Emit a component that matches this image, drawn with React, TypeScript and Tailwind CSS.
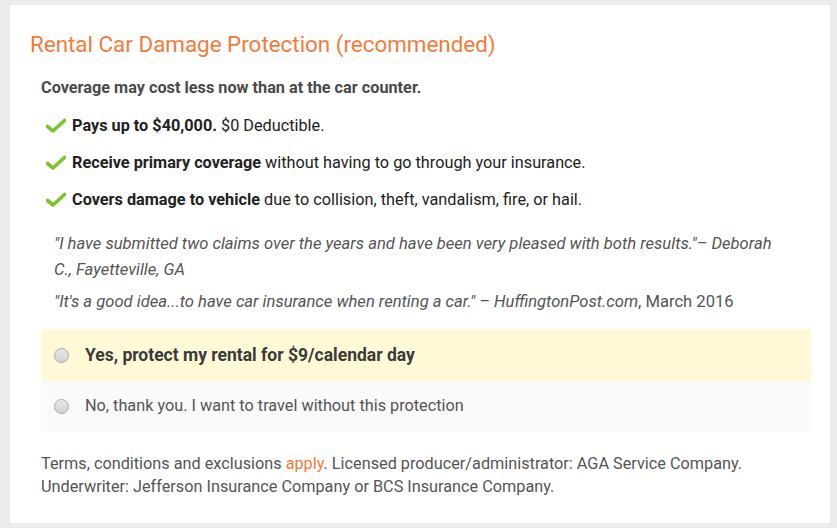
import React from "react";

function Check() {
  return (
    <svg width="20" height="16" viewBox="0 0 20 16" className="shrink-0">
      <path d="M1.5 8.5 L7 13 L18.5 2.5" fill="none" stroke="#7ac52b" strokeWidth="3.6" strokeLinecap="round" strokeLinejoin="round" />
    </svg>
  );
}

function Radio() {
  return (
    <span className="block h-[15px] w-[15px] shrink-0 rounded-full border border-[#a9a9a9] bg-gradient-to-b from-[#e9e9e9] to-[#d2d2d2]" />
  );
}

const bullets = [
  { bold: "Pays up to $40,000.", rest: " $0 Deductible." },
  { bold: "Receive primary coverage", rest: " without having to go through your insurance." },
  { bold: "Covers damage to vehicle", rest: " due to collision, theft, vandalism, fire, or hail." },
];

export default function App() {
  return (
    <div className="min-h-[528px] w-[837px] bg-[#ebebeb] pt-[5px] pl-[10px]" style={{ fontFamily: "Roboto, 'Liberation Sans', sans-serif" }}>
      <div className="h-[518px] w-[820px] bg-white pl-[20px] pt-[24px]">
        <h1 className="text-[22.4px] leading-[30px] text-[#f47b3b]">Rental Car Damage Protection (recommended)</h1>
        <div className="pl-[11px] pr-[19px]">
          <p className="mt-[19px] text-[16.25px] font-bold leading-[20px] text-[#4a4a4a]">Coverage may cost less now than at the car counter.</p>
          <ul className="mt-[18px] flex flex-col gap-[17px] pl-[5px]">
            {bullets.map((b) => (
              <li key={b.bold} className="flex items-center gap-[6px] text-[16.25px] leading-[20px] text-[#222]">
                <Check />
                <span>
                  <span className="font-bold">{b.bold}</span>
                  {b.rest}
                </span>
              </li>
            ))}
          </ul>
          <div className="mt-[21px] pl-[13px] pr-[20px] text-[16.6px] leading-[26px] text-[#555]">
            <p className="italic">"I have submitted two claims over the years and have been very pleased with both results."– Deborah C., Fayetteville, GA</p>
            <p className="mt-[6px]">
              <span className="italic">"It's a good idea...to have car insurance when renting a car." – HuffingtonPost.com</span>, March 2016
            </p>
          </div>
          <div className="mt-[14px]">
            <label className="flex h-[52px] items-center gap-[16px] bg-[#fffad5] pl-[13px]">
              <Radio />
              <span className="text-[17.5px] font-bold text-[#3a3a3a]">Yes, protect my rental for $9/calendar day</span>
            </label>
            <label className="flex h-[51px] items-center gap-[16px] bg-[#fafafa] pl-[13px]">
              <Radio />
              <span className="text-[16.25px] text-[#555]">No, thank you. I want to travel without this protection</span>
            </label>
          </div>
          <p className="mt-[19.5px] text-[16.25px] leading-[23px] text-[#555]">
            Terms, conditions and exclusions <span className="text-[#f47b3b]">apply</span>. Licensed producer/administrator: AGA Service Company. Underwriter: Jefferson Insurance Company or BCS Insurance Company.
          </p>
        </div>
      </div>
    </div>
  );
}
